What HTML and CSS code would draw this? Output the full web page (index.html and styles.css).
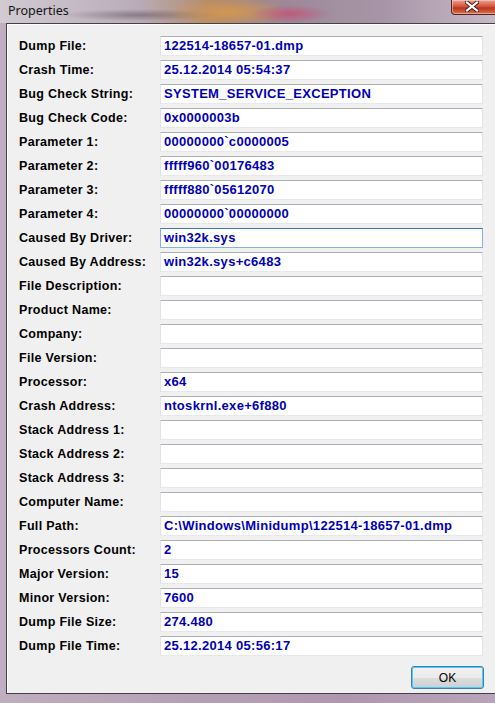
FILE: index.html
```html
<!DOCTYPE html>
<html lang="en">
<head>
    <meta charset="UTF-8">
    <meta name="viewport" content="width=device-width, initial-scale=1.0">
    <title>Properties</title>
    <link rel="stylesheet" href="styles.css">
</head>
<body>
    <div class="window">
        <div class="titlebar">
            <span class="title">Properties</span>
            <div class="close">
                <svg width="14" height="11" viewBox="0 0 14 11">
                    <path d="M2 1.5 L12 9.5 M12 1.5 L2 9.5" stroke="#4a1a14" stroke-width="4" stroke-linecap="square"/>
                    <path d="M2 1.5 L12 9.5 M12 1.5 L2 9.5" stroke="#ffffff" stroke-width="2.2" stroke-linecap="square"/>
                </svg>
            </div>
        </div>
        <div class="client">
            <div class="props">
                <div class="row"><span class="label">Dump File:</span><div class="field">122514-18657-01.dmp</div></div>
                <div class="row"><span class="label">Crash Time:</span><div class="field">25.12.2014 05:54:37</div></div>
                <div class="row"><span class="label">Bug Check String:</span><div class="field">SYSTEM_SERVICE_EXCEPTION</div></div>
                <div class="row"><span class="label">Bug Check Code:</span><div class="field">0x0000003b</div></div>
                <div class="row"><span class="label">Parameter 1:</span><div class="field">00000000`c0000005</div></div>
                <div class="row"><span class="label">Parameter 2:</span><div class="field">fffff960`00176483</div></div>
                <div class="row"><span class="label">Parameter 3:</span><div class="field">fffff880`05612070</div></div>
                <div class="row"><span class="label">Parameter 4:</span><div class="field">00000000`00000000</div></div>
                <div class="row"><span class="label">Caused By Driver:</span><div class="field focused">win32k.sys</div></div>
                <div class="row"><span class="label">Caused By Address:</span><div class="field">win32k.sys+c6483</div></div>
                <div class="row"><span class="label">File Description:</span><div class="field"></div></div>
                <div class="row"><span class="label">Product Name:</span><div class="field"></div></div>
                <div class="row"><span class="label">Company:</span><div class="field"></div></div>
                <div class="row"><span class="label">File Version:</span><div class="field"></div></div>
                <div class="row"><span class="label">Processor:</span><div class="field">x64</div></div>
                <div class="row"><span class="label">Crash Address:</span><div class="field">ntoskrnl.exe+6f880</div></div>
                <div class="row"><span class="label">Stack Address 1:</span><div class="field"></div></div>
                <div class="row"><span class="label">Stack Address 2:</span><div class="field"></div></div>
                <div class="row"><span class="label">Stack Address 3:</span><div class="field"></div></div>
                <div class="row"><span class="label">Computer Name:</span><div class="field"></div></div>
                <div class="row"><span class="label">Full Path:</span><div class="field">C:\Windows\Minidump\122514-18657-01.dmp</div></div>
                <div class="row"><span class="label">Processors Count:</span><div class="field">2</div></div>
                <div class="row"><span class="label">Major Version:</span><div class="field">15</div></div>
                <div class="row"><span class="label">Minor Version:</span><div class="field">7600</div></div>
                <div class="row"><span class="label">Dump File Size:</span><div class="field">274.480</div></div>
                <div class="row"><span class="label">Dump File Time:</span><div class="field">25.12.2014 05:56:17</div></div>
            </div>
            <div class="buttons">
                <button class="ok">OK</button>
            </div>
        </div>
    </div>
</body>
</html>
```

FILE: styles.css
```css
body {
    margin: 0;
    padding: 0;
    width: 495px;
    height: 703px;
    overflow: hidden;
    font-family: 'Liberation Sans', Arial, sans-serif;
}

/* aero glass frame */
.window {
    height: 703px;
    background: linear-gradient(90deg, #bfaebf 0%, #b4a0b5 40%, #ae98b0 70%, #b8a4ba 100%);
    position: relative;
}

.titlebar {
    height: 23px;
    position: relative;
    background:
        radial-gradient(ellipse 40px 9px at 290px 14px, rgba(205, 70, 110, 0.7), transparent),
        radial-gradient(ellipse 60px 14px at 228px 12px, rgba(210, 150, 80, 1), transparent),
        radial-gradient(ellipse 80px 6px at 140px 15px, rgba(90, 75, 85, 0.5), transparent),
        linear-gradient(90deg, #d2cbd2 0%, #b9acb8 28%, #b38c6e 42%, #9c8898 58%, #a896a8 78%, #c6b9c6 100%);
}

.title {
    position: absolute;
    left: 8px;
    top: 2px;
    font-family: 'Noto Sans', 'Open Sans', sans-serif;
    font-size: 12.5px;
    color: #141414;
}

.close {
    position: absolute;
    left: 451px;
    top: 0;
    width: 50px;
    height: 15px;
    box-sizing: border-box;
    border: 1px solid #4e2424;
    border-top: none;
    border-radius: 0 0 4px 4px;
    background: linear-gradient(#e9a293, #cf4d33 50%, #b8341d 56%, #d9734f);
    box-shadow: inset 0 0 0 1px rgba(255, 220, 210, 0.5);
    display: flex;
    justify-content: center;
    padding: 1px 8px 0 0;
}

.client {
    position: absolute;
    left: 6px;
    top: 23px;
    width: 500px;
    height: 669px;
    background: #f0f0f0;
    border: 1px solid #454045;
    box-shadow: inset 1px 1px 0 #ffffff;
}

.props {
    padding: 12px 0 0 12px;
    display: flex;
    flex-direction: column;
    gap: 4px;
}

.row {
    display: flex;
    align-items: center;
    height: 20px;
}

.label {
    width: 141px;
    font-size: 12.5px;
    font-weight: bold;
    color: #000;
    letter-spacing: 0.3px;
}

.field {
    width: 318px;
    height: 18px;
    padding-left: 3px;
    background: #fff;
    border: 1px solid #e2e3ea;
    border-top-color: #abadb3;
    border-bottom-color: #e3e9ef;
    color: #0000b8;
    font-size: 13px;
    font-weight: bold;
    line-height: 18px;
    letter-spacing: 0.3px;
    white-space: nowrap;
}

.field.focused {
    border-color: #7eb4ea;
    border-top-color: #3d7bad;
}

.buttons {
    display: flex;
    padding: 10px 0 0 404px;
}

.ok {
    width: 73px;
    height: 23px;
    border: 1px solid #3c7fb1;
    border-radius: 3px;
    background: linear-gradient(#f2f2f2 0%, #ebebeb 50%, #dddddd 51%, #cfcfcf 100%);
    box-shadow: inset 0 0 0 1px #48d0f8;
    font-family: 'Liberation Sans', Arial, sans-serif;
    font-size: 12px;
    color: #000;
    padding: 0;
}
```
